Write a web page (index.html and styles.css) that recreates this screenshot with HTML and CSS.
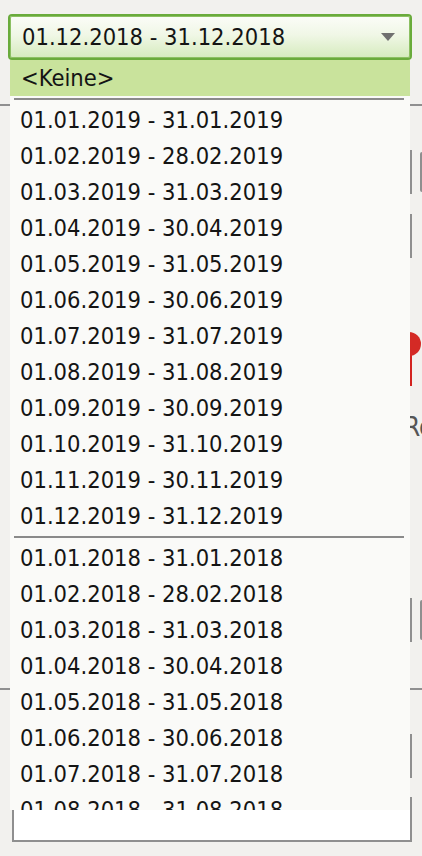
FILE: index.html
```html
<!DOCTYPE html>
<html>
	<head>
		<meta charset="UTF-8">
		<title>Zeitraum</title>
		<link rel="stylesheet" href="styles.css">
	</head>
	<body>
		<div class="page">
			<div class="select">
				<span class="value">01.12.2018 - 31.12.2018</span>
				<span class="arrow"></span>
			</div>

			<div class="rule"></div>
			<div class="field first"><span class="btn"></span></div>
			<div class="field second"></div>
			<svg class="pin" width="24" height="54" viewBox="0 0 24 54">
				<rect x="13" y="22" width="2" height="32" fill="#d3231f"/>
				<circle cx="12" cy="12" r="12" fill="#d42a25"/>
			</svg>
			<div class="caption">Referenz</div>
			<div class="field third"><span class="btn"></span></div>
			<div class="rule low"></div>
			<div class="field fourth"></div>
			<div class="input"></div>

			<div class="list">
				<div class="opt none">&lt;Keine&gt;</div>
				<div class="sep"></div>
				<div class="opt">01.01.2019 - 31.01.2019</div>
				<div class="opt">01.02.2019 - 28.02.2019</div>
				<div class="opt">01.03.2019 - 31.03.2019</div>
				<div class="opt">01.04.2019 - 30.04.2019</div>
				<div class="opt">01.05.2019 - 31.05.2019</div>
				<div class="opt">01.06.2019 - 30.06.2019</div>
				<div class="opt">01.07.2019 - 31.07.2019</div>
				<div class="opt">01.08.2019 - 31.08.2019</div>
				<div class="opt">01.09.2019 - 30.09.2019</div>
				<div class="opt">01.10.2019 - 31.10.2019</div>
				<div class="opt">01.11.2019 - 30.11.2019</div>
				<div class="opt">01.12.2019 - 31.12.2019</div>
				<div class="sep"></div>
				<div class="opt">01.01.2018 - 31.01.2018</div>
				<div class="opt">01.02.2018 - 28.02.2018</div>
				<div class="opt">01.03.2018 - 31.03.2018</div>
				<div class="opt">01.04.2018 - 30.04.2018</div>
				<div class="opt">01.05.2018 - 31.05.2018</div>
				<div class="opt">01.06.2018 - 30.06.2018</div>
				<div class="opt">01.07.2018 - 31.07.2018</div>
				<div class="opt">01.08.2018 - 31.08.2018</div>
				<div class="opt">01.09.2018 - 30.09.2018</div>
			</div>
		</div>
	</body>
</html>
```

FILE: styles.css
```css
*{margin:0;padding:0;box-sizing:border-box;}
html,body{height:100%;}
body{
	background:#f2f1ee; overflow:hidden; color:#141414;
	font-family:"DejaVu Sans Condensed","DejaVu Sans",sans-serif; font-size:23.5px;
}
.page{position:relative; width:422px; height:856px; overflow:hidden;}

/* the select itself */
.select{
	display:flex; align-items:center; justify-content:space-between;
	margin:14px 0 0 8px; width:404px; height:46px; padding:0 15px 0 12px;
	border:2px solid #6aab3c; border-radius:4px;
	box-shadow:inset 0 0 0 1px #8cc063;
	background:linear-gradient(#fbfcf8,#f0f7e6 45%,#d5ebbd);
}
.value{white-space:nowrap;}
.arrow{width:0;height:0; border-left:7px solid transparent; border-right:7px solid transparent; border-top:8px solid #707070;}

/* form behind the open list */
.rule{height:2px; background:#8f8f8f; margin-top:44px;}
.rule.low{margin-top:46px;}
.field{height:44px; margin-left:410px; border-left:2px solid #8f8f8f; display:flex; align-items:center;}
.field.first{margin-top:44px;}
.field.second{margin-top:20px;}
.field.third{margin-top:156px;}
.field.fourth{margin-top:44px;}
.btn{display:block; margin-left:8px; width:40px; height:40px; border:2px solid #8f8f8f; border-radius:7px;}
.pin{display:block; margin:74px 0 0 397px;}
.caption{margin:26px 0 0 404px; height:30px; line-height:30px; font-size:26px; color:#555; white-space:nowrap;}
.input{margin:19px 0 0 12px; width:400px; height:45px; background:#fff; border:2px solid #8f8f8f;}

/* dropdown list */
.list{
	position:absolute; left:10px; top:60px; width:400px; height:750px;
	background:#fafaf8; overflow:hidden;
}
.opt{height:36px; line-height:36px; padding-left:10px; white-space:nowrap;}
.opt.none{background:#c9e39c; padding-left:11px;}
.sep{height:2px; background:#8a8a8a; margin:2px 6px 2px 4px;}
```
